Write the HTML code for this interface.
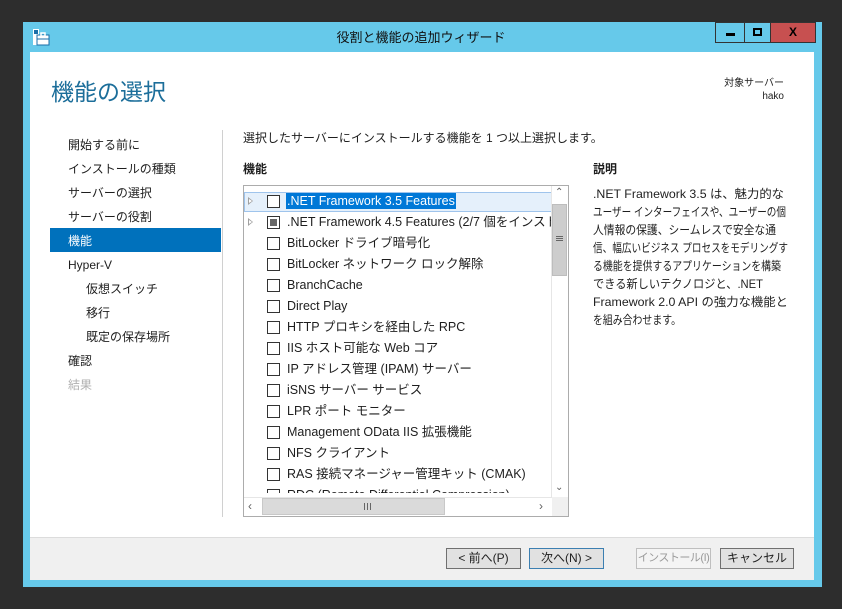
<!DOCTYPE html>
<html><head><meta charset="utf-8"><style>
*{margin:0;padding:0;box-sizing:border-box}
body{width:842px;height:609px;background:#2d2d2d;position:relative;overflow:hidden;font-family:"Liberation Sans","Noto Sans CJK JP",sans-serif;font-size:12px;color:#1e1e1e}
.a{position:absolute}
.win{left:23px;top:22px;width:799px;height:565px;background:#66c9ea}
.client{left:30px;top:52px;width:784px;height:528px;background:#fff}
.footer{left:30px;top:537px;width:784px;height:43px;background:#f0f0f0;border-top:1px solid #dcdcdc}
.nav{left:68px;font-size:12px;line-height:16px;white-space:nowrap}
.btn{top:548px;height:21px;border:1px solid #707070;background:#e1e1e1;font-size:12px;text-align:center;line-height:19px;white-space:nowrap;overflow:hidden}
.row{left:244px;width:308px;height:21px;font-size:12.5px;line-height:16px;white-space:nowrap;overflow:hidden}
.cb{position:absolute;left:23px;top:4px;width:13px;height:13px;border:1px solid #333;background:#fff}
.tx{position:absolute;left:43px;top:2px;line-height:16px}
.tri{position:absolute;left:4px;top:6px;width:0;height:0;border-left:5px solid #a0a0a0;border-top:4px solid transparent;border-bottom:4px solid transparent}
.tri:after{content:"";position:absolute;left:-4px;top:-2px;border-left:3px solid #fff;border-top:2px solid transparent;border-bottom:2px solid transparent}
svg text{font-family:"Liberation Sans","Noto Sans CJK JP",sans-serif;font-size:12px;fill:#1e1e1e}
</style></head><body>
<div class="a win"></div>
<svg class="a" style="left:32px;top:28px" width="18" height="18" viewBox="0 0 18 18"><rect x="1" y="1" width="6" height="16" fill="#fff"/><rect x="2" y="2" width="4" height="4" fill="#1a6ea8"/><rect x="5" y="7" width="12" height="10" fill="#fff" stroke="#1a6ea8"/><rect x="9" y="5" width="4" height="3" fill="none" stroke="#fff" stroke-width="1.5"/><line x1="5" y1="11" x2="17" y2="11" stroke="#1a6ea8"/></svg>
<div class="a" style="left:0;width:842px;top:29px;text-align:center;font-size:13px;line-height:18px;color:#111">役割と機能の追加ウィザード</div>
<div class="a" style="left:715px;top:22px;width:30px;height:21px;border:1px solid #333;background:#66c9ea"><div class="a" style="left:10px;top:10px;width:9px;height:3px;background:#000"></div></div>
<div class="a" style="left:744px;top:22px;width:27px;height:21px;border:1px solid #333;background:#66c9ea"><div class="a" style="left:8px;top:5px;width:9px;height:8px;border:2px solid #000"></div></div>
<div class="a" style="left:770px;top:22px;width:46px;height:21px;border:1px solid #333;background:#c75050;color:#000;font-weight:bold;text-align:center;line-height:19px;font-size:12px">X</div>
<div class="a client"></div>
<div class="a" style="left:51px;top:76px;font-size:23px;line-height:32px;color:#1c6e9a">機能の選択</div>
<div class="a" style="left:700px;top:77px;width:84px;text-align:right;font-size:10px;line-height:13px">対象サーバー<br>hako</div>
<div class="a" style="left:50px;top:228px;width:171px;height:24px;background:#0071bc"></div>
<div class="a nav" style="top:137px">開始する前に</div>
<div class="a nav" style="top:161px">インストールの種類</div>
<div class="a nav" style="top:185px">サーバーの選択</div>
<div class="a nav" style="top:209px">サーバーの役割</div>
<div class="a nav" style="top:233px;color:#fff">機能</div>
<div class="a nav" style="top:257px">Hyper-V</div>
<div class="a nav" style="top:281px;left:86px">仮想スイッチ</div>
<div class="a nav" style="top:305px;left:86px">移行</div>
<div class="a nav" style="top:329px;left:86px">既定の保存場所</div>
<div class="a nav" style="top:353px">確認</div>
<div class="a nav" style="top:377px;color:#b0b0b0">結果</div>
<div class="a" style="left:222px;top:130px;width:1px;height:387px;background:#d0d0d0"></div>
<div class="a" style="left:243px;top:130px;font-size:12px;line-height:16px">選択したサーバーにインストールする機能を 1 つ以上選択します。</div>
<div class="a" style="left:243px;top:161px;font-size:12px;line-height:16px;font-weight:bold">機能</div>
<div class="a" style="left:593px;top:161px;font-size:12px;line-height:16px;font-weight:bold">説明</div>
<div class="a" style="left:243px;top:185px;width:326px;height:332px;border:1px solid #acacac;background:#fff;overflow:hidden">
<div class="a" style="left:0;top:6px;width:308px;height:20px;background:#e5f0fb;border:1px solid #9fc4ec"></div>
</div>
<div class="a row" style="top:191px"><div class="tri"></div><div class="cb"></div><div class="tx" style="left:42px;background:#0078d7;color:#fff;padding:0 1px">.NET Framework 3.5 Features</div></div>
<div class="a row" style="top:212px"><div class="tri"></div><div class="cb"><div class="a" style="left:2px;top:2px;width:7px;height:7px;background:#666"></div></div><div class="tx">.NET Framework 4.5 Features (2/7 個をインストール済み)</div></div>
<div class="a row" style="top:233px"><div class="cb"></div><div class="tx">BitLocker ドライブ暗号化</div></div>
<div class="a row" style="top:254px"><div class="cb"></div><div class="tx">BitLocker ネットワーク ロック解除</div></div>
<div class="a row" style="top:275px"><div class="cb"></div><div class="tx">BranchCache</div></div>
<div class="a row" style="top:296px"><div class="cb"></div><div class="tx">Direct Play</div></div>
<div class="a row" style="top:317px"><div class="cb"></div><div class="tx">HTTP プロキシを経由した RPC</div></div>
<div class="a row" style="top:338px"><div class="cb"></div><div class="tx">IIS ホスト可能な Web コア</div></div>
<div class="a row" style="top:359px"><div class="cb"></div><div class="tx">IP アドレス管理 (IPAM) サーバー</div></div>
<div class="a row" style="top:380px"><div class="cb"></div><div class="tx">iSNS サーバー サービス</div></div>
<div class="a row" style="top:401px"><div class="cb"></div><div class="tx">LPR ポート モニター</div></div>
<div class="a row" style="top:422px"><div class="cb"></div><div class="tx">Management OData IIS 拡張機能</div></div>
<div class="a row" style="top:443px"><div class="cb"></div><div class="tx">NFS クライアント</div></div>
<div class="a row" style="top:464px"><div class="cb"></div><div class="tx">RAS 接続マネージャー管理キット (CMAK)</div></div>
<div class="a row" style="top:485px;height:8px"><div class="cb"></div><div class="tx">RDC (Remote Differential Compression)</div></div>
<div class="a" style="left:551px;top:186px;width:17px;height:311px;background:#fff;border-left:1px solid #e6e6e6"></div>
<div class="a" style="left:555px;top:187px;font-size:10px;line-height:12px;color:#606060">&#8963;</div>
<div class="a" style="left:552px;top:204px;width:15px;height:72px;background:#cdcdcd;border:1px solid #bdbdbd"></div>
<div class="a" style="left:556px;top:236px;width:7px;height:5px;border-top:1px solid #666;border-bottom:1px solid #666"><div class="a" style="left:0;top:1px;width:7px;height:1px;background:#666"></div></div>
<div class="a" style="left:555px;top:482px;font-size:10px;line-height:12px;color:#606060">&#8964;</div>
<div class="a" style="left:244px;top:497px;width:308px;height:19px;background:#fff;border-top:1px solid #e6e6e6"></div>
<div class="a" style="left:248px;top:499px;font-size:12px;line-height:14px;color:#606060">&#8249;</div>
<div class="a" style="left:262px;top:498px;width:183px;height:17px;background:#dadada;border:1px solid #c8c8c8"></div>
<div class="a" style="left:364px;top:503px;width:7px;height:7px;border-left:1px solid #666;border-right:1px solid #666"><div class="a" style="left:2px;top:0;width:1px;height:7px;background:#666"></div></div>
<div class="a" style="left:539px;top:499px;font-size:12px;line-height:14px;color:#606060">&#8250;</div>
<div class="a" style="left:552px;top:497px;width:16px;height:19px;background:#f0f0f0"></div>
<svg class="a" style="left:593px;top:185px" width="215" height="150">
<text x="0" y="13" textLength="191" lengthAdjust="spacingAndGlyphs">.NET Framework 3.5 は、魅力的な</text>
<text x="0" y="31" textLength="193" lengthAdjust="spacingAndGlyphs">ユーザー インターフェイスや、ユーザーの個</text>
<text x="0" y="49" textLength="183" lengthAdjust="spacingAndGlyphs">人情報の保護、シームレスで安全な通</text>
<text x="0" y="67" textLength="195" lengthAdjust="spacingAndGlyphs">信、幅広いビジネス プロセスをモデリングす</text>
<text x="0" y="85" textLength="188" lengthAdjust="spacingAndGlyphs">る機能を提供するアプリケーションを構築</text>
<text x="0" y="103" textLength="170" lengthAdjust="spacingAndGlyphs">できる新しいテクノロジと、.NET</text>
<text x="0" y="121" textLength="195" lengthAdjust="spacingAndGlyphs">Framework 2.0 API の強力な機能と</text>
<text x="0" y="139" textLength="88" lengthAdjust="spacingAndGlyphs">を組み合わせます。</text>
</svg>
<div class="a footer"></div>
<div class="a btn" style="left:446px;width:75px">&lt; 前へ(P)</div>
<div class="a btn" style="left:529px;width:75px;border-color:#3c7fb1">次へ(N) &gt;</div>
<div class="a btn" style="left:636px;width:75px;border-color:#bfbfbf;background:#f4f4f4;color:#9a9a9a;font-size:11px;letter-spacing:-0.5px">インストール(I)</div>
<div class="a btn" style="left:720px;width:74px">キャンセル</div>
</body></html>
